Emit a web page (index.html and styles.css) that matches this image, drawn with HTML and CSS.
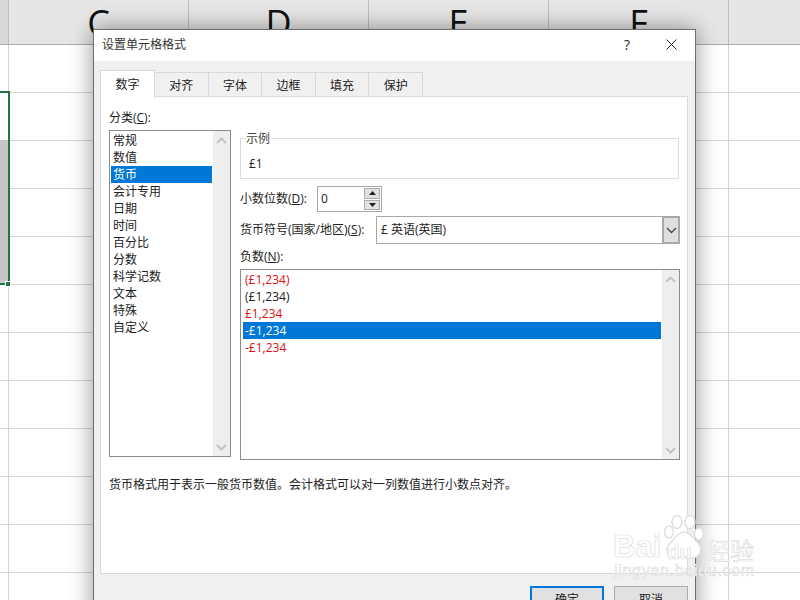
FILE: index.html
```html
<!DOCTYPE html>
<html lang="zh-CN">
<head>
<meta charset="utf-8">
<title>设置单元格格式</title>
<link rel="stylesheet" href="styles.css">
</head>
<body>
<div class="sheet">
  <div class="col-head">
    <div class="corner"></div>
    <div class="col">C</div>
    <div class="col">D</div>
    <div class="col">E</div>
    <div class="col">F</div>
    <div class="col"></div>
  </div>
  <div class="rows"></div>
  <div class="selected-cells"></div>
  <div class="selection"></div>
  <div class="handle"></div>
</div>

<div class="dialog">
  <div class="titlebar">
    <span class="title">设置单元格格式</span>
    <span class="help">?</span>
    <svg class="close" width="11" height="11" viewBox="0 0 11 11"><path d="M.5.5l10 10M10.5.5l-10 10" stroke="#222" stroke-width="1" fill="none"/></svg>
  </div>
  <div class="body">
    <div class="tabs">
      <div class="tab active">数字</div>
      <div class="tab">对齐</div>
      <div class="tab">字体</div>
      <div class="tab">边框</div>
      <div class="tab">填充</div>
      <div class="tab">保护</div>
    </div>
    <div class="panel">
      <div class="columns">
        <div class="left">
          <div class="label cat-label">分类(<u>C</u>):</div>
          <div class="listbox cat-list">
            <div class="items">
              <div class="item">常规</div>
              <div class="item">数值</div>
              <div class="item sel">货币</div>
              <div class="item">会计专用</div>
              <div class="item">日期</div>
              <div class="item">时间</div>
              <div class="item">百分比</div>
              <div class="item">分数</div>
              <div class="item">科学记数</div>
              <div class="item">文本</div>
              <div class="item">特殊</div>
              <div class="item">自定义</div>
            </div>
            <div class="scroll">
              <svg width="11" height="7" viewBox="0 0 11 7"><path d="M1 6l4.500-4.500L10 6" stroke="#c4c4c4" stroke-width="2" fill="none"/></svg>
              <svg width="11" height="7" viewBox="0 0 11 7"><path d="M1 1l4.500 4.500L10 1" stroke="#c4c4c4" stroke-width="2" fill="none"/></svg>
            </div>
          </div>
        </div>
        <div class="right">
          <fieldset class="sample">
            <legend>示例</legend>
            <div class="sample-value">£1</div>
          </fieldset>
          <div class="field decimals">
            <span class="label dec-label">小数位数(<u>D</u>):</span>
            <div class="spin">
              <span class="spin-value">0</span>
              <div class="spin-btns">
                <div class="spin-btn"><svg width="7" height="4" viewBox="0 0 7 4"><path d="M3.500 0L7 4H0z" fill="#222"/></svg></div>
                <div class="spin-btn"><svg width="7" height="4" viewBox="0 0 7 4"><path d="M0 0h7L3.500 4z" fill="#222"/></svg></div>
              </div>
            </div>
          </div>
          <div class="field currency">
            <span class="label cur-label">货币符号(国家/地区)(<u>S</u>):</span>
            <div class="select">
              <span class="select-value">£ 英语(英国)</span>
              <div class="select-btn"><svg width="11" height="7" viewBox="0 0 11 7"><path d="M1 1l4.500 4.500L10 1" stroke="#444" stroke-width="1.300" fill="none"/></svg></div>
            </div>
          </div>
          <div class="label neg-label">负数(<u>N</u>):</div>
          <div class="listbox neg-list">
            <div class="items neg-items">
              <div class="item neg red">(£1,234)</div>
              <div class="item neg">(£1,234)</div>
              <div class="item neg red">£1,234</div>
              <div class="item neg sel">-£1,234</div>
              <div class="item neg red">-£1,234</div>
            </div>
            <div class="scroll">
              <svg width="11" height="7" viewBox="0 0 11 7"><path d="M1 6l4.500-4.500L10 6" stroke="#c4c4c4" stroke-width="2" fill="none"/></svg>
              <svg width="11" height="7" viewBox="0 0 11 7"><path d="M1 1l4.500 4.500L10 1" stroke="#c4c4c4" stroke-width="2" fill="none"/></svg>
            </div>
          </div>
        </div>
      </div>
      <p class="desc">货币格式用于表示一般货币数值。会计格式可以对一列数值进行小数点对齐。</p>
    </div>
    <div class="actions">
      <div class="btn primary">确定</div>
      <div class="btn">取消</div>
    </div>
  </div>
</div>

<div class="watermark">
  <svg class="paw" width="44" height="50" viewBox="0 0 44 50">
    <g fill="#fff" stroke="#e0e0e0" stroke-width="1.500">
      <ellipse cx="13" cy="8" rx="5" ry="6.500"/>
      <ellipse cx="26" cy="8" rx="5" ry="6.500"/>
      <ellipse cx="5" cy="18" rx="4.500" ry="6"/>
      <ellipse cx="35" cy="20" rx="4.500" ry="6"/>
      <path d="M20 18c7 0 9 7 14 11 5 5 3 15-6 15-4 0-6-1-8-1s-5 1-9 1c-9 0-10-10-5-15 5-4 7-11 14-11z"/>
    </g>
  </svg>
  <span class="wm-bai">Bai</span>
  <span class="wm-du">du</span>
  <span class="wm-cn">经验</span>
  <span class="wm-url">jingyan.baidu.com</span>
</div>
</body>
</html>
```
FILE: styles.css
```css
* { box-sizing: border-box; }
html, body { margin: 0; padding: 0; width: 800px; height: 600px; overflow: hidden; background: #fff; }
body { position: relative; font: 12px/17px "Open Sans", "Noto Sans CJK SC", sans-serif; color: #222; }
u { text-decoration: underline; }

.sheet { width: 800px; height: 600px; position: relative; overflow: hidden; }
.col-head { display: flex; height: 45px; background: #e6e6e6; border-bottom: 1px solid #ababab; }
.corner { width: 9px; flex: none; background: #d9d9d9; border-right: 1px solid #bdbdbd; }
.col { width: 180px; flex: none; border-right: 1px solid #bdbdbd; text-align: center; font: 36px/46px "Open Sans", sans-serif; color: #111; }
.rows {
  height: 555px;
  background-image:
    linear-gradient(to right, transparent 8px, #d4d4d4 8px, #d4d4d4 9px, transparent 9px, transparent 728px, #d4d4d4 728px, #d4d4d4 729px, transparent 729px),
    repeating-linear-gradient(to bottom, transparent 0, transparent 47px, #d4d4d4 47px, #d4d4d4 48px);
}
.selected-cells { position: absolute; left: 0; top: 140px; width: 8px; height: 143px; background: #c6c6c6; }
.selection { position: absolute; left: -4px; top: 91px; width: 14px; height: 194px; border: 2px solid #217346; }
.handle { position: absolute; left: 5px; top: 281px; width: 6px; height: 6px; background: #217346; border: 1px solid #fff; }

.dialog {
  position: absolute; left: 93px; top: 29px; width: 603px; height: 600px;
  background: #f0f0f0; border: 1px solid #6d6d6d;
  box-shadow: 0 0 22px rgba(0,0,0,.42);
  display: flex; flex-direction: column;
}
.titlebar { height: 31px; flex: none; background: #fff; display: flex; align-items: center; padding: 0 18px 2px 8px; }
.title { flex: 1; color: #333; }
.help { width: 12px; margin-right: 33px; text-align: center; font: 14px/17px "Open Sans", sans-serif; color: #222; }
.close { flex: none; }

.body { flex: 1; padding: 9px 8px 0 6px; }
.tabs { display: flex; height: 27px; align-items: flex-end; position: relative; z-index: 1; margin-bottom: -1px; }
.tab { width: 53.600px; height: 25px; line-height: 26px; text-align: center; border: 1px solid #d9d9d9; border-left: 0; background: #f0f0f0; color: #222; }
.tab.active { height: 28px; width: 55px; background: #fff; border-left: 1px solid #d9d9d9; border-bottom: 0; line-height: 27px; margin-bottom: -1px; }
.panel { height: 478px; width: 588px; background: #fff; border: 1px solid #d9d9d9; padding: 12px 0 0 8px; }
.columns { display: flex; gap: 9px; }
.left { width: 122px; flex: none; }
.right { width: 440px; flex: none; padding-top: 23px; }
.label { display: block; color: #222; }
.cat-label { margin-bottom: 4px; }

.listbox { display: flex; border: 1px solid #8c8c8c; background: #fff; }
.cat-list { height: 327px; }
.neg-list { height: 191px; }
.items { flex: 1; padding: 1px 1px 0; min-width: 0; }
.item { height: 17px; line-height: 17px; padding-left: 2px; color: #222; }
.item.sel { background: #0078d7; color: #fff; }
.neg-items { padding: 1px 1px 0 2px; }
.item.red { color: #dd1111; }
.scroll { width: 17px; flex: none; background: #eeeeee; display: flex; flex-direction: column; justify-content: space-between; align-items: center; padding: 6px 0 5px; }

.sample { margin: 0; height: 47px; width: 439px; padding: 0 0 0 8px; border: 1px solid #dcdcdc; display: block; }
.sample legend { padding: 0 1px 0 0; margin-left: -3px; line-height: 13px; height: 13px; color: #444; }
.sample-value { line-height: 17px; margin-top: 10px; }

.field { display: flex; align-items: center; }
.field .label, .spin-value, .select-value { padding-bottom: 2px; }
.decimals { margin-top: 7px; height: 26px; }
.dec-label { width: 77px; flex: none; }
.spin { width: 65px; height: 26px; border: 1px solid #a9a9a9; display: flex; align-items: center; background: #fff; padding: 1px 1px 1px 3px; }
.spin-value { flex: 1; }
.spin-btns { width: 16px; height: 22px; display: flex; flex-direction: column; gap: 1px; }
.spin-btn { flex: 1; background: #e1e1e1; border: 1px solid #adadad; display: flex; align-items: center; justify-content: center; }
.currency { margin-top: 4px; height: 28px; }
.cur-label { width: 136px; flex: none; }
.select { width: 304px; height: 28px; border: 1px solid #a9a9a9; display: flex; align-items: center; background: #fff; padding-left: 4px; }
.select-value { flex: 1; }
.select-btn { width: 18px; height: 28px; margin-right: -1px; background: #dfdfdf; border: 2px solid #a9a9a9; display: flex; align-items: center; justify-content: center; }
.neg-label { margin-top: 4px; margin-bottom: 4px; }

.desc { margin: 16px 0 0; line-height: 17px; color: #222; }

.actions { display: flex; justify-content: flex-end; gap: 10px; padding: 12px 0 0; margin-right: -1px; }
.btn { width: 74px; height: 26px; background: #e1e1e1; border: 1px solid #adadad; text-align: center; line-height: 26px; color: #222; }
.btn.primary { border: 2px solid #0078d7; line-height: 24px; }

.watermark { position: absolute; left: 610px; top: 512px; width: 150px; height: 72px; pointer-events: none; }
.paw { position: absolute; left: 54px; top: 2px; }
.wm-bai, .wm-du, .wm-cn, .wm-url { position: absolute; color: #fff; -webkit-text-stroke: .7px #dedede; white-space: nowrap; }
.wm-bai { left: 3px; top: 19px; font: bold 31px/32px "Liberation Sans", sans-serif; }
.wm-du { left: 57px; top: 30px; font: bold 20px/20px "Liberation Sans", sans-serif; }
.wm-cn { left: 96px; top: 26px; font: 24px/23px "Noto Sans CJK SC", sans-serif; }
.wm-url { left: 4px; top: 50px; font: 16px/18px "Liberation Sans", sans-serif; letter-spacing: .7px; }
```
